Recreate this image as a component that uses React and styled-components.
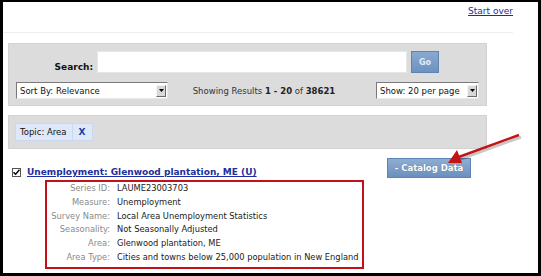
import React from "react";
import styled, { createGlobalStyle } from "styled-components";

const GlobalStyle = createGlobalStyle`
  html, body {
    margin: 0;
    padding: 0;
    background: #ffffff;
  }
  body {
    font-family: "DejaVu Sans", "Liberation Sans", sans-serif;
  }
`;

const details = [
  { label: "Series ID:", value: "LAUME23003703" },
  { label: "Measure:", value: "Unemployment" },
  { label: "Survey Name:", value: "Local Area Unemployment Statistics" },
  { label: "Seasonality:", value: "Not Seasonally Adjusted" },
  { label: "Area:", value: "Glenwood plantation, ME" },
  { label: "Area Type:", value: "Cities and towns below 25,000 population in New England" },
];

const DropArrow = () => (
  <svg width="5" height="3" viewBox="0 0 5 3">
    <path d="M0 0h5L2.5 3z" fill="#000" />
  </svg>
);

const Select = ({ width, children }) => (
  <SelectBox $width={width}>
    <span>{children}</span>
    <SelectButton>
      <DropArrow />
    </SelectButton>
  </SelectBox>
);

const App = () => {
  return (
    <>
      <GlobalStyle />
      <Frame>
        <Header>
          <TopLink href="#">Start over</TopLink>
        </Header>
        <Main>
          <SearchPanel>
            <SearchRow>
              <SearchLabel>Search:</SearchLabel>
              <SearchInput type="text" />
              <GoButton>Go</GoButton>
            </SearchRow>
            <OptionsRow>
              <Select width={152}>Sort By: Relevance</Select>
              <Results>
                Showing Results <b>1 - 20</b> of <b>38621</b>
              </Results>
              <Select width={103}>Show: 20 per page</Select>
            </OptionsRow>
          </SearchPanel>

          <TopicPanel>
            <Chip>
              <ChipText>Topic: Area</ChipText>
              <ChipClose>X</ChipClose>
            </Chip>
          </TopicPanel>

          <ResultHead>
            <TitleGroup>
              <CheckBox>
                <svg width="7" height="7" viewBox="0 0 7 7">
                  <path d="M0.5 3.2 L2.6 5.3 L6.5 0.8" stroke="#000" strokeWidth="1.4" fill="none" />
                </svg>
              </CheckBox>
              <TitleLink href="#">Unemployment: Glenwood plantation, ME (U)</TitleLink>
            </TitleGroup>
            <CatalogButton>- Catalog Data</CatalogButton>
          </ResultHead>

          <DetailBox>
            {details.map((d) => (
              <DetailRow key={d.label}>
                <DetailLabel>{d.label}</DetailLabel>
                <DetailValue>{d.value}</DetailValue>
              </DetailRow>
            ))}
          </DetailBox>
        </Main>

        <Pointer width="90" height="40" viewBox="0 0 90 40">
          <g transform="translate(2,2)">
            <path d="M79 2 L16 25" stroke="rgba(0,0,0,0.22)" strokeWidth="3" fill="none" />
          </g>
          <path d="M79 2 L16 25" stroke="#c41414" strokeWidth="2.4" fill="none" />
          <path d="M8 30 L17 17 L22 30 z" fill="#c41414" />
        </Pointer>
      </Frame>
    </>
  );
};

const Frame = styled.div`
  position: relative;
  width: 541px;
  height: 276px;
  box-sizing: border-box;
  border-style: solid;
  border-color: #000;
  border-width: 2px 3px 3px 3px;
  background: #fff;
  overflow: hidden;
  font-size: 8.5px;
  color: #222;
`;

const Header = styled.div`
  height: 31px;
  margin-right: 25px;
  border-bottom: 1px solid #eeeeee;
  display: flex;
  justify-content: flex-end;
  align-items: flex-start;
  padding-top: 4px;
  box-sizing: border-box;
`;

const TopLink = styled.a`
  color: #1c2f9c;
  font-size: 9px;
  text-decoration: underline;
`;

const Main = styled.div`
  width: 479px;
  margin-left: 5px;
`;

const SearchPanel = styled.div`
  margin-top: 10px;
  height: 63px;
  box-sizing: border-box;
  background: #dcdcdc;
  border: 1px solid #d2d2d2;
  padding: 7px 7px 0 6px;
`;

const SearchRow = styled.div`
  display: flex;
  align-items: center;
  gap: 4px;
`;

const SearchLabel = styled.span`
  width: 78px;
  text-align: right;
  font-weight: bold;
  font-size: 9px;
  color: #111;
  padding-top: 9px;
`;

const SearchInput = styled.input`
  width: 310px;
  height: 22px;
  box-sizing: border-box;
  margin: 0;
  border: 1px solid #e6e6e6;
  background: #fff;
  outline: none;
`;

const GoButton = styled.button`
  width: 28px;
  height: 22px;
  margin: 0;
  padding: 0;
  border: 1px solid #5d84b4;
  background: linear-gradient(#89a9cf, #6d92c0);
  color: #e4ecf6;
  font-family: inherit;
  font-size: 8px;
  font-weight: bold;
`;

const OptionsRow = styled.div`
  display: flex;
  align-items: center;
  margin-top: 9px;
  padding-left: 1px;
`;

const SelectBox = styled.div`
  width: ${(p) => p.$width}px;
  height: 17px;
  box-sizing: border-box;
  display: flex;
  align-items: center;
  justify-content: space-between;
  background: #fff;
  border: 1px solid;
  border-color: #7a7a7a #e8e8e8 #e8e8e8 #7a7a7a;
  padding: 0 1px 0 3px;
  font-size: 8.5px;
  color: #111;
`;

const SelectButton = styled.div`
  width: 10px;
  height: 12px;
  box-sizing: border-box;
  display: flex;
  align-items: center;
  justify-content: center;
  background: #d8d8d8;
  border: 1px solid;
  border-color: #f4f4f4 #6a6a6a #6a6a6a #f4f4f4;
`;

const Results = styled.div`
  flex: 1;
  text-align: center;
  font-size: 8.5px;
  color: #333;
  padding-right: 16px;
  b {
    color: #222;
  }
`;

const TopicPanel = styled.div`
  margin-top: 9px;
  height: 34px;
  box-sizing: border-box;
  background: #dcdcdc;
  border: 1px solid #d2d2d2;
  padding: 7px 0 0 6px;
`;

const Chip = styled.div`
  display: inline-flex;
  height: 18px;
  box-sizing: border-box;
  background: #dfe8f8;
  border: 1px solid #c9d7ef;
`;

const ChipText = styled.span`
  display: flex;
  align-items: center;
  padding: 0 5px 0 4px;
  border-right: 1px solid #c9d7ef;
  font-size: 8.5px;
  color: #111;
`;

const ChipClose = styled.span`
  display: flex;
  align-items: center;
  padding: 0 7px 0 6px;
  font-size: 9px;
  font-weight: bold;
  color: #1f3c9e;
`;

const ResultHead = styled.div`
  margin-top: 9px;
  height: 20px;
  display: flex;
  justify-content: space-between;
  align-items: flex-end;
  padding-right: 16px;
`;

const TitleGroup = styled.div`
  display: flex;
  align-items: center;
  gap: 6px;
  padding-left: 4px;
  padding-bottom: 1px;
`;

const CheckBox = styled.span`
  width: 9px;
  height: 9px;
  box-sizing: border-box;
  border: 1px solid #555;
  display: flex;
  align-items: center;
  justify-content: center;
  background: #fff;
`;

const TitleLink = styled.a`
  color: #1c2f9c;
  font-size: 9px;
  font-weight: bold;
  text-decoration: underline;
`;

const CatalogButton = styled.button`
  width: 84px;
  height: 20px;
  margin: 0;
  padding: 0;
  border: 1px solid #5d84b4;
  background: linear-gradient(#8eadd2, #6b90bf);
  color: #ffffff;
  font-family: inherit;
  font-size: 8.5px;
  font-weight: bold;
  text-shadow: 0 0 1px rgba(0, 0, 0, 0.3);
`;

const DetailBox = styled.div`
  margin: 2px 0 0 37px;
  width: 319px;
  height: 89px;
  box-sizing: border-box;
  border: 2px solid #c40f18;
`;

const DetailRow = styled.div`
  display: grid;
  grid-template-columns: 63px 1fr;
  column-gap: 7px;
  line-height: 13.8px;
  font-size: 8.3px;
  white-space: nowrap;
`;

const DetailLabel = styled.span`
  text-align: right;
  color: #8a8a8a;
`;

const DetailValue = styled.span`
  color: #1a1a1a;
`;

const Pointer = styled.svg`
  position: absolute;
  left: 437px;
  top: 131px;
`;

export default App;
